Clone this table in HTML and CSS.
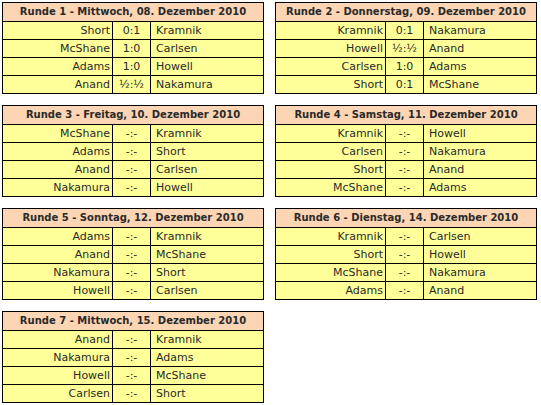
FILE: index.html
```html
<!DOCTYPE html>
<html>
<head>
<meta charset="utf-8">
<link rel="stylesheet" href="styles.css">
</head>
<body>
<div class="grid">
  <table class="round">
    <tr><th colspan="3">Runde 1 - Mittwoch, 08. Dezember 2010</th></tr>
    <tr><td class="home">Short</td><td class="score">0:1</td><td class="away">Kramnik</td></tr>
    <tr><td class="home">McShane</td><td class="score">1:0</td><td class="away">Carlsen</td></tr>
    <tr><td class="home">Adams</td><td class="score">1:0</td><td class="away">Howell</td></tr>
    <tr><td class="home">Anand</td><td class="score">½:½</td><td class="away">Nakamura</td></tr>
  </table>
  <table class="round">
    <tr><th colspan="3">Runde 2 - Donnerstag, 09. Dezember 2010</th></tr>
    <tr><td class="home">Kramnik</td><td class="score">0:1</td><td class="away">Nakamura</td></tr>
    <tr><td class="home">Howell</td><td class="score">½:½</td><td class="away">Anand</td></tr>
    <tr><td class="home">Carlsen</td><td class="score">1:0</td><td class="away">Adams</td></tr>
    <tr><td class="home">Short</td><td class="score">0:1</td><td class="away">McShane</td></tr>
  </table>
  <table class="round">
    <tr><th colspan="3">Runde 3 - Freitag, 10. Dezember 2010</th></tr>
    <tr><td class="home">McShane</td><td class="score">-:-</td><td class="away">Kramnik</td></tr>
    <tr><td class="home">Adams</td><td class="score">-:-</td><td class="away">Short</td></tr>
    <tr><td class="home">Anand</td><td class="score">-:-</td><td class="away">Carlsen</td></tr>
    <tr><td class="home">Nakamura</td><td class="score">-:-</td><td class="away">Howell</td></tr>
  </table>
  <table class="round">
    <tr><th colspan="3">Runde 4 - Samstag, 11. Dezember 2010</th></tr>
    <tr><td class="home">Kramnik</td><td class="score">-:-</td><td class="away">Howell</td></tr>
    <tr><td class="home">Carlsen</td><td class="score">-:-</td><td class="away">Nakamura</td></tr>
    <tr><td class="home">Short</td><td class="score">-:-</td><td class="away">Anand</td></tr>
    <tr><td class="home">McShane</td><td class="score">-:-</td><td class="away">Adams</td></tr>
  </table>
  <table class="round">
    <tr><th colspan="3">Runde 5 - Sonntag, 12. Dezember 2010</th></tr>
    <tr><td class="home">Adams</td><td class="score">-:-</td><td class="away">Kramnik</td></tr>
    <tr><td class="home">Anand</td><td class="score">-:-</td><td class="away">McShane</td></tr>
    <tr><td class="home">Nakamura</td><td class="score">-:-</td><td class="away">Short</td></tr>
    <tr><td class="home">Howell</td><td class="score">-:-</td><td class="away">Carlsen</td></tr>
  </table>
  <table class="round">
    <tr><th colspan="3">Runde 6 - Dienstag, 14. Dezember 2010</th></tr>
    <tr><td class="home">Kramnik</td><td class="score">-:-</td><td class="away">Carlsen</td></tr>
    <tr><td class="home">Short</td><td class="score">-:-</td><td class="away">Howell</td></tr>
    <tr><td class="home">McShane</td><td class="score">-:-</td><td class="away">Nakamura</td></tr>
    <tr><td class="home">Adams</td><td class="score">-:-</td><td class="away">Anand</td></tr>
  </table>
  <table class="round">
    <tr><th colspan="3">Runde 7 - Mittwoch, 15. Dezember 2010</th></tr>
    <tr><td class="home">Anand</td><td class="score">-:-</td><td class="away">Kramnik</td></tr>
    <tr><td class="home">Nakamura</td><td class="score">-:-</td><td class="away">Adams</td></tr>
    <tr><td class="home">Howell</td><td class="score">-:-</td><td class="away">McShane</td></tr>
    <tr><td class="home">Carlsen</td><td class="score">-:-</td><td class="away">Short</td></tr>
  </table>
</div>
</body>
</html>
```
FILE: styles.css
```css
html, body {
  margin: 0;
  padding: 0;
  background: #ffffff;
}
body {
  font-family: "DejaVu Sans", Verdana, sans-serif;
  font-size: 11px;
  color: #2a2a2a;
}
.grid {
  display: grid;
  grid-template-columns: 262px 262px;
  column-gap: 11px;
  row-gap: 11px;
  padding: 2px;
}
.round {
  width: 262px;
  border-collapse: collapse;
  border: 1px solid #000;
}
.round th,
.round td {
  border: 1px solid #000;
  height: 17px;
  padding: 0;
  line-height: 17px;
  white-space: nowrap;
}
.round th {
  height: 18px;
  line-height: 18px;
  background: #fcd5b4;
  font-weight: bold;
  font-size: 10px;
  text-align: center;
}
.round td {
  background: #ffff99;
}
.home {
  width: 107px;
  text-align: right;
  padding-right: 2px !important;
}
.score {
  width: 37px;
  text-align: center;
}
.away {
  text-align: left;
  padding-left: 5px !important;
}
```
